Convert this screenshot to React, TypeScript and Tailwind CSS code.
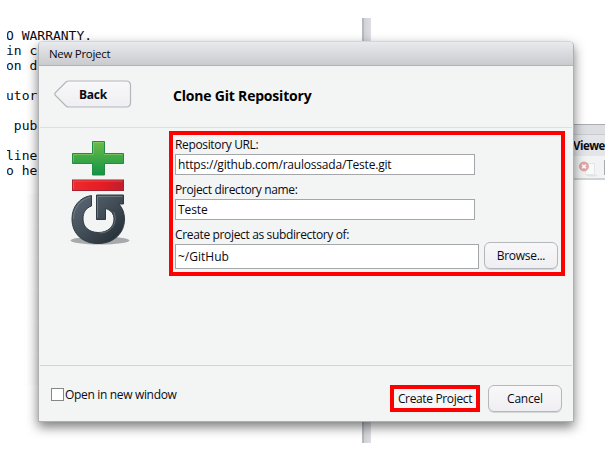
import React from "react";

const consoleLines = ["O WARRANTY.", "in c", "on d", "", "utor", "", " pub", "", "line", "o he"];

function GitLogo() {
  return (
    <svg width="62" height="108" viewBox="0 0 62 108" className="block">
      <defs>
        <linearGradient id="green" x1="0" y1="0" x2="0" y2="1">
          <stop offset="0" stopColor="#6cbb48" />
          <stop offset="1" stopColor="#129447" />
        </linearGradient>
        <linearGradient id="red" x1="0" y1="0" x2="1" y2="0">
          <stop offset="0" stopColor="#ef2a2e" />
          <stop offset="0.6" stopColor="#e51c24" />
          <stop offset="1" stopColor="#bf1f2e" />
        </linearGradient>
        <linearGradient id="slate" x1="0" y1="0" x2="1" y2="1">
          <stop offset="0" stopColor="#5d6c78" />
          <stop offset="0.5" stopColor="#414c56" />
          <stop offset="1" stopColor="#20282f" />
        </linearGradient>
      </defs>
      <ellipse cx="31" cy="100.500" rx="29.500" ry="4" fill="#a7a9aa" />
      <path d="M23.500 1.500h12v12h19v10h-19v11.500h-12V23.500h-20v-10h20z" fill="url(#green)" stroke="#238b43" strokeWidth="1" />
      <path d="M24.500 13.500v-11h10M4.500 22v-7.500h20M35 14.500h18.500" fill="none" stroke="#8fd071" strokeWidth="0.800" opacity="0.700" />
      <rect x="3.500" y="40" width="51" height="10.500" fill="url(#red)" stroke="#a82130" />
      <path d="M4.500 49.500V41h49" fill="none" stroke="#ff6b63" strokeWidth="0.800" opacity="0.700" />
      <path
        d="M22.500 55.500C10 57.500 3 67 3 79C3 94 14 103.500 29 103.500C45 103.500 55.500 93 55.500 79C55.500 73 53.500 68 50 64H54.500V55H27.500V79.500H36.500V68.500C42 70 45 74 45 79C45 87 38.500 92.500 29.500 92.500C20 92.500 14 87 14 79C14 72 17 68 22.500 66Z"
        fill="url(#slate)"
        stroke="#303a43"
        strokeLinejoin="round"
      />
      <path d="M21.500 57C10 60 4.500 69 4.500 79M28.500 78V56.500h25M44.500 72c5 9-1 21-14 21" fill="none" stroke="#8b969e" strokeWidth="0.700" opacity="0.800" />
    </svg>
  );
}

function DeletePageIcon() {
  return (
    <svg width="20" height="17" viewBox="0 0 20 17" className="block">
      <ellipse cx="13" cy="14.500" rx="5.500" ry="1" fill="#dfe3e5" />
      <path d="M6.500 2.500h9v11h-9z" fill="#f8f9f9" stroke="#e3e6e7" />
      <circle cx="5" cy="5.500" r="4.500" fill="#e3aaa9" stroke="#d7908f" strokeWidth="0.700" />
      <path d="M3.200 3.700l3.600 3.600m0-3.600l-3.600 3.600" stroke="#fff" strokeWidth="1.600" />
    </svg>
  );
}

const button =
  "flex h-[27px] items-center justify-center rounded-[6px] border border-[#b4b7bc] bg-linear-to-b from-[#f8f8f9] to-[#efeff3] shadow-[0_1px_0_#d4d6d8]";
const input = "w-[300px] border border-[#a4a6a9] bg-white pl-[2px]";

export default function App() {
  return (
    <div className="relative h-[461px] w-[612px] overflow-hidden bg-white font-['Open_Sans','Noto_Sans',sans-serif] text-[12px] tracking-[-0.350px] text-[#0a0a12]">
      <div className="flex h-[461px]">
        <div className="flex w-[362px] flex-col pt-[28px] pl-[7px]">
          <pre className="h-[165px] w-[100px] overflow-hidden font-['DejaVu_Sans_Mono',monospace] text-[13px] leading-[15px] tracking-normal">
            {consoleLines.map((line, i) => (
              <div key={i} className="-ml-px h-[15px]">{line}</div>
            ))}
          </pre>
          <div className="ml-[21px] flex w-[60px] flex-col">
            {[0, 1, 2, 3, 4, 5].map((i) => (
              <div key={i} className="h-[32px] border-t border-white bg-[#fcfcfc]" />
            ))}
          </div>
        </div>
        <div className="mt-[18px] h-[425px] w-[9px] border-l-2 border-[#b7b9be] bg-linear-to-r from-[#cfd1d6] to-[#dddfe4]" />
        <div className="w-[234px] pt-[124px]">
          <div className="h-[10px] border-t border-[#aaacb0] bg-[#dcdee2]" />
          <div className="flex h-[22px] items-center border-t border-[#c8cacf] bg-[#e3e5e9] pl-[202px]">
            <span className="overflow-hidden text-[11.500px] font-bold tracking-[-0.500px] whitespace-nowrap">Viewer</span>
          </div>
          <div className="flex h-[24px] items-center justify-between border-b-2 border-[#cfd2d4] bg-[#f2f4f4] pl-[208px]">
            <div className="pt-[5px]"><DeletePageIcon /></div>
            <div className="h-[15px] w-px bg-[#a9acaf]" />
          </div>
        </div>
      </div>

      <div className="absolute top-[41px] left-[38px] flex h-[381px] w-[536px] flex-col overflow-hidden rounded-t-[5px] border border-[#aeb0b3] border-t-[#d4d6d8] bg-[#f3f5f4] shadow-[0_5px_12px_0_rgba(0,0,0,0.52)]">
        <div className="flex h-[24px] items-center border-b border-[#b1b3b6] bg-linear-to-b from-[#e9eaed] to-[#c9cbce] pl-[10px]">
          <span className="text-[11.500px] tracking-[-0.300px]">New Project</span>
        </div>
        <div className="mx-px flex h-[62px] items-center border-b border-[#dcdfde] pl-[14px]">
          <div className="relative mt-[-5px] flex h-[28px] w-[78px] items-center justify-center">
            <svg width="78" height="28" viewBox="0 0 78 28" className="absolute inset-0">
              <defs>
                <linearGradient id="back" x1="0" y1="0" x2="0" y2="1">
                  <stop offset="0" stopColor="#f8f8f9" />
                  <stop offset="1" stopColor="#efeff3" />
                </linearGradient>
              </defs>
              <path d="M15 1H72Q76.500 1 76.500 5.500V22.500Q76.500 27 72 27H15Q13 27 12 26L1.500 15.500Q0 14 1.500 12.500L12 2Q13 1 15 1Z" fill="url(#back)" stroke="#b3b6bb" strokeWidth="1.200" />
            </svg>
            <span className="relative top-px text-[12px] font-bold tracking-[-0.200px]">Back</span>
          </div>
          <h1 className="mt-[-2px] ml-[41px] text-[14px] font-bold tracking-[-0.200px] text-black">Clone Git Repository</h1>
        </div>
        <div className="mx-px flex h-[238px] border-b border-[#d2d4d4] pt-[3px]">
          <div className="w-[129px] pt-[9px] pl-[29px]">
            <GitLogo />
          </div>
          <div className="flex h-[145px] w-[396px] flex-col border-4 border-[#ff0000] pt-px pl-[2px]">
            <label className="h-[18px] leading-[18px]">Repository URL:</label>
            <div className={input + " h-[21px] leading-[20px] tracking-[-0.200px]"}>https://github.com/raulossada/Teste.git</div>
            <label className="mt-[6px] h-[18px] leading-[18px]">Project directory name:</label>
            <div className={input + " h-[21px] leading-[20px] tracking-[-0.100px]"}>Teste</div>
            <label className="mt-[6px] h-[18px] leading-[18px]">Create project as subdirectory of:</label>
            <div className="flex gap-[5px]">
              <div className="h-[25px] w-[304px] border border-[#a4a6a9] bg-white pl-[2px] leading-[24px] tracking-normal">~/GitHub</div>
              <div className={button + " mt-[-2px] w-[74px] tracking-[-0.300px]"}>Browse...</div>
            </div>
          </div>
        </div>
        <div className="flex flex-1 items-start pt-[18px] pl-[12px]">
          <div className="mt-[4px] size-[13px] border border-[#858789] bg-white" />
          <span className="ml-px pt-px leading-[20px] tracking-[-0.330px]">Open in new window</span>
          <div className="mt-px ml-auto flex h-[27px] w-[90px] items-center justify-center border-4 border-[#ff0000] bg-[#f6f6f8] whitespace-nowrap">Create Project</div>
          <div className={button + " mt-px mr-[11px] ml-[8px] w-[74px] tracking-[-0.200px]"}>Cancel</div>
        </div>
      </div>
    </div>
  );
}
